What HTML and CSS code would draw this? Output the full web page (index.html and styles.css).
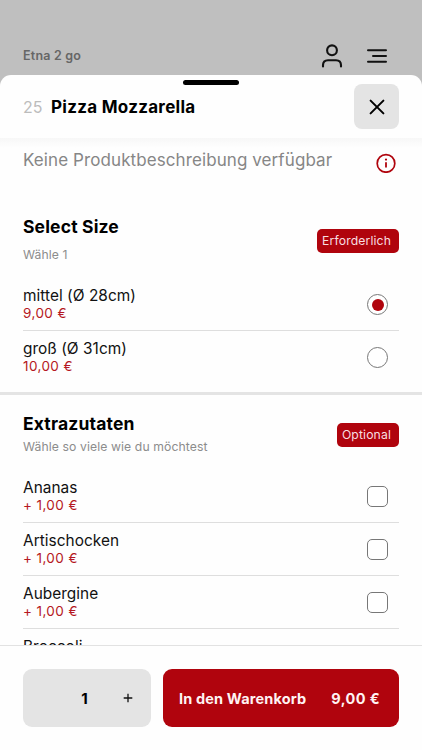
FILE: index.html
```html
<!DOCTYPE html>
<html lang="de">
<head>
<meta charset="utf-8">
<meta name="viewport" content="width=device-width, initial-scale=1">
<title>Pizza Mozzarella</title>
<link rel="stylesheet" href="styles.css">
</head>
<body>
<div class="app">
  <header class="topbar">
    <span class="shop">Etna 2 go</span>
    <svg class="user" viewBox="0 0 24 26" width="24" height="26" fill="none" stroke="#111" stroke-width="2.1"><circle cx="12" cy="7.3" r="4.9"/><path d="M3 23.4v-1.2c0-3.2 2-5 5-5h8c3 0 5 1.8 5 5v1.2" stroke-linecap="round"/></svg>
    <svg class="menu" viewBox="0 0 22 16" width="22" height="16" stroke="#111" stroke-width="2" stroke-linecap="round"><path d="M2 2.3h18M7 8h13M2 13.7h18"/></svg>
  </header>
  <main class="sheet">
    <div class="handle"></div>
    <div class="title">
      <span class="number">25</span>
      <h1>Pizza Mozzarella</h1>
      <button class="close" aria-label="Schließen"><svg viewBox="0 0 16 16" width="16" height="16" stroke="#000" stroke-width="2" stroke-linecap="round"><path d="M1.6 1.6l12.8 12.8M14.4 1.6L1.6 14.4"/></svg></button>
    </div>
    <div class="content">
      <div class="description">
        <p>Keine Produktbeschreibung verfügbar</p>
        <svg viewBox="0 0 20 20" width="20" height="20" fill="none" stroke="#b0040d"><circle cx="10" cy="10.4" r="8.8" stroke-width="1.7"/><path d="M10 9.2v5.4" stroke-width="1.8"/><circle cx="10" cy="6.6" r="1.1" fill="#b0040d" stroke="none"/></svg>
      </div>
      <section class="group size">
        <div class="heading"><div><h2>Select Size</h2><p>Wähle 1</p></div><span class="badge">Erforderlich</span></div>
        <div class="option"><div><p class="name">mittel (Ø 28cm)</p><p class="price">9,00 €</p></div><span class="control radio checked"></span></div>
        <div class="option"><div><p class="name">groß (Ø 31cm)</p><p class="price">10,00 €</p></div><span class="control radio"></span></div>
      </section>
      <section class="group extras">
        <div class="heading"><div><h2>Extrazutaten</h2><p>Wähle so viele wie du möchtest</p></div><span class="badge">Optional</span></div>
        <div class="option"><div><p class="name">Ananas</p><p class="price">+ 1,00 €</p></div><span class="control"></span></div>
        <div class="option"><div><p class="name">Artischocken</p><p class="price">+ 1,00 €</p></div><span class="control"></span></div>
        <div class="option"><div><p class="name">Aubergine</p><p class="price">+ 1,00 €</p></div><span class="control"></span></div>
        <div class="option"><div><p class="name">Broccoli</p></div></div>
      </section>
    </div>
    <footer class="actions">
      <div class="quantity"><span></span><b>1</b><svg viewBox="0 0 10 10" width="10" height="10" stroke="#111" stroke-width="1.3"><path d="M.7 5h8.6M5 .7v8.6"/></svg></div>
      <button class="cart"><span class="label">In den Warenkorb</span><span class="total">9,00 €</span></button>
    </footer>
  </main>
</div>
</body>
</html>
```
FILE: styles.css
```css
* { box-sizing: border-box; }
body, h1, h2, p { margin: 0; }
body { font-family: Inter, "Liberation Sans", sans-serif; color: #000; background: #bfbfbf; }
button { border: 0; padding: 0; font: inherit; }
svg { display: block; flex: none; }

.app { height: 750px; display: flex; flex-direction: column; overflow: hidden; }
.topbar { height: 75px; flex: none; display: flex; align-items: center; padding: 36px 34px 0 23px; }
.shop { flex: 1; font-size: 12.5px; font-weight: 600; letter-spacing: .2px; color: #666; }
.user { margin-right: 22px; }
.sheet { flex: 1; min-height: 0; display: flex; flex-direction: column; background: #fefefe; border-radius: 11px 11px 0 0; }
.handle { width: 56px; height: 5px; margin: 5px auto 0; flex: none; border-radius: 3px; background: #000; }
.title { height: 53px; flex: none; display: flex; align-items: center; padding: 0 23px 10px; }
.number { width: 28px; font-size: 16px; color: #bcbcbc; }
h1 { flex: 1; font-size: 17px; font-weight: 700; line-height: 22px; letter-spacing: .28px; }
.close { width: 45px; height: 45px; display: grid; place-items: center; border-radius: 8px; background: #e4e4e4; }
.content { flex: 1; min-height: 0; overflow: hidden; background: linear-gradient(#f7f7f7, #fefefe 10px); }

.description { height: 74px; display: flex; justify-content: space-between; align-items: flex-start; padding: 10px 26px 0 23px; font-size: 17px; line-height: 24px; letter-spacing: .09px; color: #868686; }
.description svg { margin-top: 5px; }
.heading { display: flex; justify-content: space-between; padding: 0 23px; }
h2 { font-size: 17.5px; line-height: 24px; font-weight: 700; letter-spacing: .16px; }
.heading p { font-size: 12.2px; line-height: 18px; letter-spacing: .1px; color: #8c8c8c; }
.badge { height: 24px; padding: 0 8px 0 5px; border-radius: 5px; background: #b0040d; color: #f8dfe1; font-size: 12.2px; line-height: 24px; letter-spacing: .13px; }
.size .heading { height: 66px; padding-top: 3px; }
.size .heading p { margin-top: 7px; }
.size .badge { margin-top: 14px; }
.size { height: 183.4px; border-bottom: 3px solid #e4e4e4; }
.size .option:last-child { border-bottom: 0; }
.extras .heading { height: 74.2px; padding-top: 17px; }
.extras .heading p { margin-top: 1.5px; }
.extras .badge { margin-top: 11px; }
.option { height: 53.3px; margin: 0 23px; padding: 8px 11px 0 0; display: flex; justify-content: space-between; border-bottom: 1px solid #dedede; }
.name { font-size: 15.4px; line-height: 20px; letter-spacing: .04px; color: #111; }
.price { font-size: 13.5px; line-height: 15px; letter-spacing: .4px; color: #b51822; }
.control { width: 21px; height: 21px; margin-top: 8px; flex: none; border: 1px solid #777; border-radius: 5px; background: #fff; }
.radio { display: grid; place-items: center; border-radius: 50%; }
.checked::after { content: ""; width: 12px; height: 12px; border-radius: 50%; background: #b0040d; }

.actions { height: 105px; flex: none; display: flex; gap: 12px; padding: 23px 23px 0; border-top: 1px solid #e2e2e2; background: #fefefe; }
.quantity, .cart { height: 58px; border-radius: 9px; }
.quantity { width: 128px; display: grid; grid-template-columns: 41px 1fr 46px; align-items: center; justify-items: center; background: #e4e4e4; font-size: 15px; }
.quantity b { font-weight: 700; }
.cart { flex: 1; display: flex; align-items: center; justify-content: space-between; padding: 0 19px 0 16px; background: #b0040d; color: #fff3f3; font-size: 14.5px; font-weight: 700; letter-spacing: .15px; }
.total { letter-spacing: .4px; }
```
